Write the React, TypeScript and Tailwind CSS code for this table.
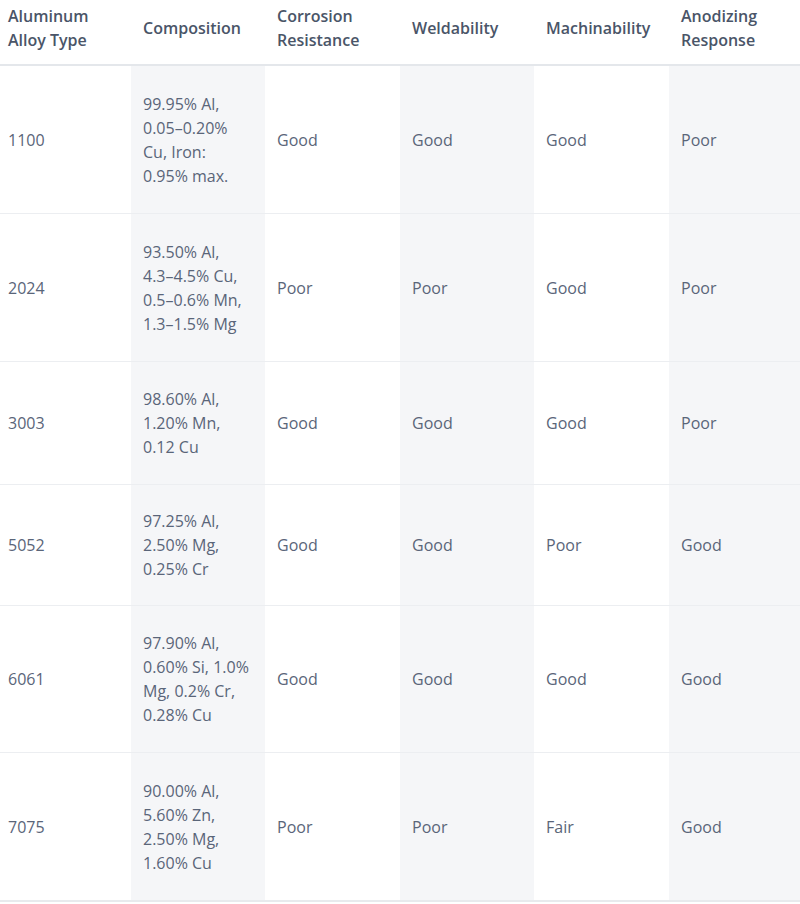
import React from 'react';

const rows = [
  { type: '1100', comp: ['99.95% Al,', '0.05–0.20%', 'Cu, Iron:', '0.95% max.'], corr: 'Good', weld: 'Good', mach: 'Good', anod: 'Poor', pad: 'pt-[26px] pb-[25px]' },
  { type: '2024', comp: ['93.50% Al,', '4.3–4.5% Cu,', '0.5–0.6% Mn,', '1.3–1.5% Mg'], corr: 'Poor', weld: 'Poor', mach: 'Good', anod: 'Poor', pad: 'pt-[26px] pb-[25px]' },
  { type: '3003', comp: ['98.60% Al,', '1.20% Mn,', '0.12 Cu'], corr: 'Good', weld: 'Good', mach: 'Good', anod: 'Poor', pad: 'pt-[25px] pb-[25px]' },
  { type: '5052', comp: ['97.25% Al,', '2.50% Mg,', '0.25% Cr'], corr: 'Good', weld: 'Good', mach: 'Poor', anod: 'Good', pad: 'pt-[24px] pb-[24px]' },
  { type: '6061', comp: ['97.90% Al,', '0.60% Si, 1.0%', 'Mg, 0.2% Cr,', '0.28% Cu'], corr: 'Good', weld: 'Good', mach: 'Good', anod: 'Good', pad: 'pt-[25px] pb-[25px]' },
  { type: '7075', comp: ['90.00% Al,', '5.60% Zn,', '2.50% Mg,', '1.60% Cu'], corr: 'Poor', weld: 'Poor', mach: 'Fair', anod: 'Good', pad: 'pt-[26px] pb-[25px]' },
];

const headers = [
  'Aluminum Alloy Type',
  'Composition',
  'Corrosion Resistance',
  'Weldability',
  'Machinability',
  'Anodizing Response',
];

const App: React.FC = () => {
  return (
    <div className="w-[800px] bg-white" style={{ fontFamily: '"Open Sans", "Liberation Sans", sans-serif' }}>
      <table className="w-full table-fixed border-collapse text-[16px] leading-[24px]">
        <colgroup>
          <col className="w-[131px]" />
          <col className="w-[134px]" />
          <col className="w-[135px]" />
          <col className="w-[134px]" />
          <col className="w-[135px]" />
          <col className="w-[131px]" />
        </colgroup>
        <thead>
          <tr className="border-b-2 border-[#e4e7eb]">
            {headers.map((h, i) => (
              <th
                key={h}
                className={`pt-[4px] pb-[12px] pr-3 text-left align-middle font-semibold text-[#4a5568] ${i === 0 ? 'pl-2' : 'pl-3'}`}
              >
                {h}
              </th>
            ))}
          </tr>
        </thead>
        <tbody className="text-[#5a6579]">
          {rows.map((r, idx) => (
            <tr key={r.type} className={idx === rows.length - 1 ? 'border-b-2 border-[#e8eaed]' : 'border-b border-[#eceef1]'}>
              <td className={`${r.pad} pl-2 pr-3 align-middle`}>{r.type}</td>
              <td className={`${r.pad} px-3 align-middle bg-[#f5f6f8] whitespace-nowrap`}>
                {r.comp.map((line, i) => (
                  <React.Fragment key={i}>
                    {line}
                    {i < r.comp.length - 1 && <br />}
                  </React.Fragment>
                ))}
              </td>
              <td className={`${r.pad} px-3 align-middle`}>{r.corr}</td>
              <td className={`${r.pad} px-3 align-middle bg-[#f5f6f8]`}>{r.weld}</td>
              <td className={`${r.pad} px-3 align-middle`}>{r.mach}</td>
              <td className={`${r.pad} px-3 align-middle bg-[#f5f6f8]`}>{r.anod}</td>
            </tr>
          ))}
        </tbody>
      </table>
    </div>
  );
};

export default App;
